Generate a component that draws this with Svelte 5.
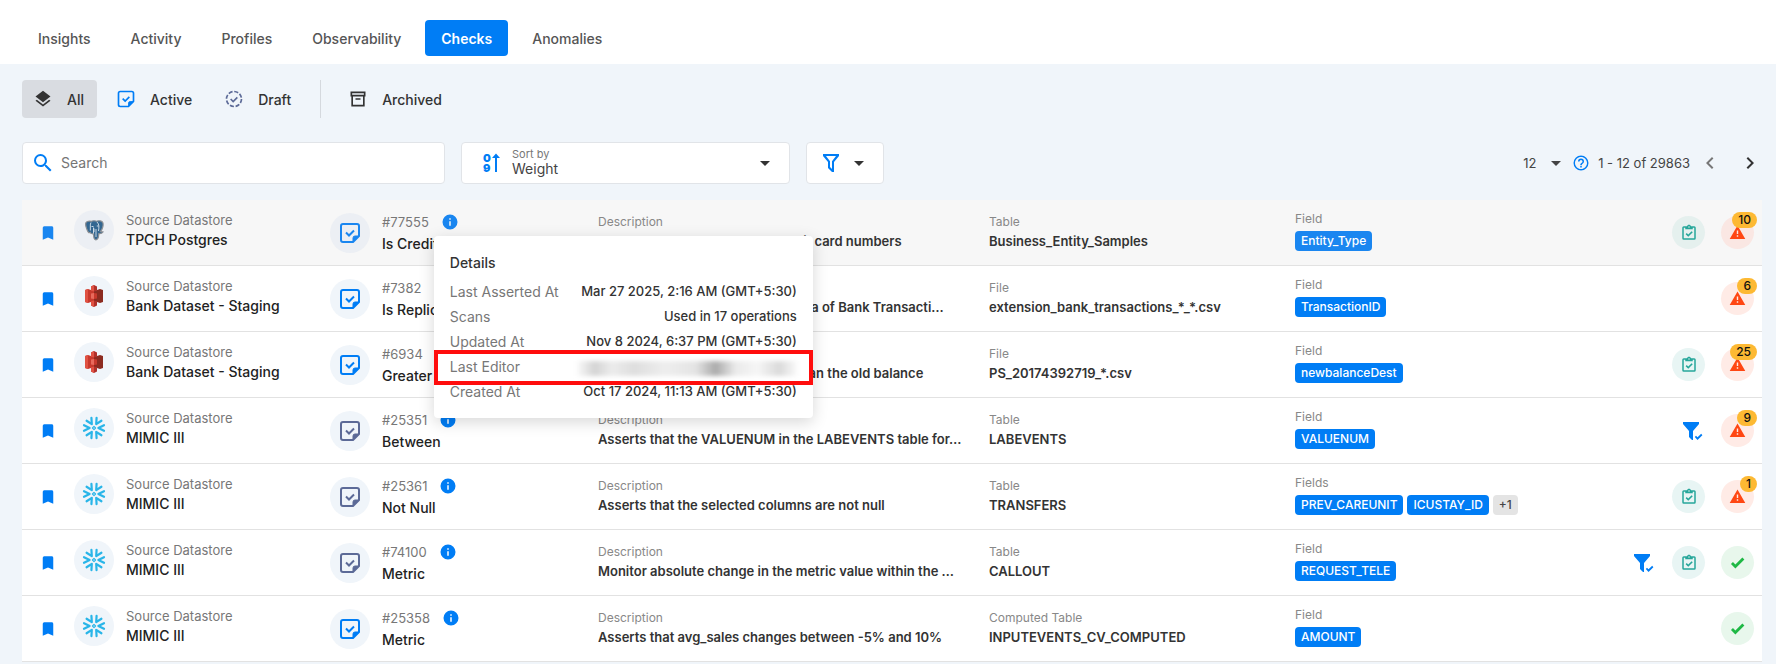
<script lang="ts">
  interface Check {
    source: 'postgres' | 's3' | 'snowflake';
    datastore: string;
    id: string;
    rule: string;
    // authored checks are blue, inferred ones are slate
    authored: boolean;
    description: string;
    containerType: string;
    container: string;
    fields: string[];
    extraFields?: number;
    filtered?: boolean;
    tagged?: boolean;
    anomalies: number;
  }

  const tabs = ['Insights', 'Activity', 'Profiles', 'Observability', 'Checks', 'Anomalies'];
  let activeTab = $state('Checks');
  let activeView = $state('All');
  let openDetails = $state('#77555');

  const checks: Check[] = [
    { source: 'postgres', datastore: 'TPCH Postgres', id: '#77555', rule: 'Is Credit Card', authored: true, description: 'Asserts that new values are credit card numbers', containerType: 'Table', container: 'Business_Entity_Samples', fields: ['Entity_Type'], tagged: true, anomalies: 10 },
    { source: 's3', datastore: 'Bank Dataset - Staging', id: '#7382', rule: 'Is Replica Of', authored: true, description: 'Asserts that the dataset is a replica of Bank Transacti…', containerType: 'File', container: 'extension_bank_transactions_*_*.csv', fields: ['TransactionID'], anomalies: 6 },
    { source: 's3', datastore: 'Bank Dataset - Staging', id: '#6934', rule: 'Greater Than Field', authored: true, description: 'A new balance must be greater than the old balance', containerType: 'File', container: 'PS_20174392719_*.csv', fields: ['newbalanceDest'], tagged: true, anomalies: 25 },
    { source: 'snowflake', datastore: 'MIMIC III', id: '#25351', rule: 'Between', authored: false, description: 'Asserts that the VALUENUM in the LABEVENTS table for…', containerType: 'Table', container: 'LABEVENTS', fields: ['VALUENUM'], filtered: true, anomalies: 9 },
    { source: 'snowflake', datastore: 'MIMIC III', id: '#25361', rule: 'Not Null', authored: false, description: 'Asserts that the selected columns are not null', containerType: 'Table', container: 'TRANSFERS', fields: ['PREV_CAREUNIT', 'ICUSTAY_ID'], extraFields: 1, tagged: true, anomalies: 1 },
    { source: 'snowflake', datastore: 'MIMIC III', id: '#74100', rule: 'Metric', authored: false, description: 'Monitor absolute change in the metric value within the …', containerType: 'Table', container: 'CALLOUT', fields: ['REQUEST_TELE'], filtered: true, tagged: true, anomalies: 0 },
    { source: 'snowflake', datastore: 'MIMIC III', id: '#25358', rule: 'Metric', authored: true, description: 'Asserts that avg_sales changes between -5% and 10%', containerType: 'Computed Table', container: 'INPUTEVENTS_CV_COMPUTED', fields: ['AMOUNT'], anomalies: 0 },
  ];

  const details = [
    { label: 'Last Asserted At', value: 'Mar 27 2025, 2:16 AM (GMT+5:30)' },
    { label: 'Scans', value: 'Used in 17 operations' },
    { label: 'Updated At', value: 'Nov 8 2024, 6:37 PM (GMT+5:30)' },
    { label: 'Last Editor', value: '' },
    { label: 'Created At', value: 'Oct 17 2024, 11:13 AM (GMT+5:30)' },
  ];

  const paths = {
    layers: 'M12,16L19.36,10.27L21,9L12,2L3,9L4.63,10.27M12,18.54L4.62,12.81L3,14.07L12,21.07L21,14.07L19.37,12.8L12,18.54Z',
    archive: 'M3 3H21V9H20V21H4V9H3V3M5 5V7H19V5H5M6 9V19H18V9H6M9 11H15V13H9V11Z',
    magnify: 'M9.5,3A6.5,6.5 0 0,1 16,9.5C16,11.11 15.41,12.59 14.44,13.73L14.71,14H15.5L20.5,19L19,20.5L14,15.5V14.71L13.73,14.44C12.59,15.41 11.11,16 9.5,16A6.5,6.5 0 0,1 3,9.5A6.5,6.5 0 0,1 9.5,3M9.5,5C7,5 5,7 5,9.5C5,12 7,14 9.5,14C12,14 14,12 14,9.5C14,7 12,5 9.5,5Z',
    caret: 'M7,10L12,15L17,10H7Z',
    funnel: 'M4 3H20V5L15 11V21H13L9 17V11L4 5V3M7 5L11 10.3V16L13 18V10.3L17 5H7Z',
    funnelCheck: 'M2 3H18V5L12 12V21H11L8 18V12L2 5V3M16.5 21L13.8 18L15 16.8L16.5 18.3L20.2 14.8L21.4 16.2L16.5 21Z',
    help: 'M11,18H13V16H11V18M12,2A10,10 0 0,0 2,12A10,10 0 0,0 12,22A10,10 0 0,0 22,12A10,10 0 0,0 12,2M12,20C7.59,20 4,16.41 4,12C4,7.59 7.59,4 12,4C16.41,4 20,7.59 20,12C20,16.41 16.41,20 12,20M12,6A4,4 0 0,0 8,10H10A2,2 0 0,1 12,8A2,2 0 0,1 14,10C14,12 11,11.75 11,15H13C13,12.75 16,12.5 16,10A4,4 0 0,0 12,6Z',
    prev: 'M15.41,16.58L10.83,12L15.41,7.41L14,6L8,12L14,18L15.41,16.58Z',
    next: 'M8.59,16.58L13.17,12L8.59,7.41L10,6L16,12L10,18L8.59,16.58Z',
    bookmark: 'M17,3H7A2,2 0 0,0 5,5V21L12,18L19,21V5C19,3.89 18.1,3 17,3Z',
    info: 'M13,9H11V7H13M13,17H11V11H13M12,2A10,10 0 0,0 2,12A10,10 0 0,0 12,22A10,10 0 0,0 22,12A10,10 0 0,0 12,2Z',
    clipboard: 'M19,3H14.82C14.4,1.84 13.3,1 12,1C10.7,1 9.6,1.84 9.18,3H5A2,2 0 0,0 3,5V19A2,2 0 0,0 5,21H19A2,2 0 0,0 21,19V5A2,2 0 0,0 19,3M12,3A1,1 0 0,1 13,4A1,1 0 0,1 12,5A1,1 0 0,1 11,4A1,1 0 0,1 12,3M7,7H17V5H19V19H5V5H7V7M7.5,13.5L9,12L11,14L15.5,9.5L17,11L11,17L7.5,13.5Z',
    alert: 'M13 14H11V9H13M13 18H11V16H13M1 21H23L12 2L1 21Z',
    check: 'M9,20.42L2.79,14.21L5.62,11.38L9,14.77L18.88,4.88L21.71,7.71L9,20.42Z',
  };

  function toggleDetails(id: string) {
    openDetails = openDetails === id ? '' : id;
  }
</script>

{#snippet icon(path: string, size: number)}
  <svg width={size} height={size} viewBox="0 0 24 24" fill="currentColor" aria-hidden="true"><path d={path} /></svg>
{/snippet}

{#snippet noteIcon(size: number)}
  <svg width={size} height={size} viewBox="0 0 24 24" fill="none" stroke="currentColor" stroke-width="2" aria-hidden="true">
    <path d="M15 21H5a2 2 0 0 1-2-2V5a2 2 0 0 1 2-2h14a2 2 0 0 1 2 2v10l-6 6Z" stroke-linejoin="round" />
    <path d="M15 21v-4a2 2 0 0 1 2-2h4Z" fill="currentColor" stroke-width="1" />
    <path d="M8 11.5l3 3 5-5" />
  </svg>
{/snippet}

{#snippet sourceLogo(source: string)}
  {#if source === 'postgres'}
    <svg width="24" height="24" viewBox="0 0 24 24" aria-hidden="true">
      <path d="M4 4.500C5.500 2.500 8 3 9.500 3.300C11 2.600 13 2.700 14.500 3.200C17 2.300 20 2.800 21 5C21.600 8 20 11.500 18.500 13.500L21 14C20 15.500 18.500 15.800 16.800 15.600C16.500 18 17 21.500 14 21.800C11.500 22 11.800 18 11.500 15.800C9 16 8.500 15.500 8.300 14.500C6.500 15.500 5.500 13 4.600 10.500C3.800 8 3 6 4 4.500Z" fill="#336791" stroke="#8b8f94" stroke-width="1.200" />
      <path d="M9 4.500C7.800 6.500 8.600 9 8.300 12.500M11.500 15.500V9.500M15 4C17.500 6.500 17 9 16.500 13M9.500 8.500H11.500M14.800 8H16.500M12 10.500V14M14 11V19" fill="none" stroke="#d9e3ec" stroke-width=".9" />
    </svg>
  {:else if source === 's3'}
    <svg width="24" height="24" viewBox="0 0 24 24" aria-hidden="true">
      <path d="M3 6l3-1 6 2v10l-6 2-3-1Z" fill="#c8392d" />
      <path d="M21 6l-3-1-6 2v10l6 2 3-1Z" fill="#8c2b20" />
      <path d="M6 5v14l-3-1V6Z" fill="#e05243" />
      <path d="M12 1l3 1.500v4.300L12 7.500 9 6.800V2.500Z" fill="#b0302a" />
      <path d="M12 23l3-1.500v-4.300L12 16.500l-3 .7v4.300Z" fill="#b0302a" />
      <path d="M12 1L9 2.500v4.300l3 .7ZM12 23l-3-1.500v-4.300l3-.7Z" fill="#e05243" />
      <path d="M9 9.500l3-.4v5.800l-3-.4Z" fill="#e86a5c" />
      <path d="M15 9.500l-3-.4v5.800l3-.4Z" fill="#c8392d" />
    </svg>
  {:else}
    <svg width="24" height="24" viewBox="0 0 24 24" fill="none" stroke="#29b5e8" stroke-width="2.200" stroke-linecap="round" stroke-linejoin="round" aria-hidden="true">
      <path d="M12 10.400L13.600 12 12 13.600 10.400 12Z" stroke-width="1.100" />
      {#each [0, 60, 120, 180, 240, 300] as angle}
        <path d="M22 9.200L16.400 12 22 14.800" transform={`rotate(${angle} 12 12)`} />
      {/each}
    </svg>
  {/if}
{/snippet}

<header class="tabs">
  <nav>
    {#each tabs as tab}
      <button class="tab" class:active={activeTab === tab} onclick={() => (activeTab = tab)}>{tab}</button>
    {/each}
  </nav>
</header>

<main>
  <div class="views">
    <button class="view" class:selected={activeView === 'All'} onclick={() => (activeView = 'All')}>
      {@render icon(paths.layers, 20)}All
    </button>
    <button class="view blue" class:selected={activeView === 'Active'} onclick={() => (activeView = 'Active')}>
      {@render noteIcon(20)}<span>Active</span>
    </button>
    <button class="view slate" class:selected={activeView === 'Draft'} onclick={() => (activeView = 'Draft')}>
      <svg width="20" height="20" viewBox="0 0 24 24" fill="none" stroke="currentColor" stroke-width="2" aria-hidden="true">
        <circle cx="12" cy="12" r="9" stroke-dasharray="5 2.070" />
        <path d="M8 12l3 3 5-5" />
      </svg><span>Draft</span>
    </button>
    <span class="divider"></span>
    <button class="view" class:selected={activeView === 'Archived'} onclick={() => (activeView = 'Archived')}>
      {@render icon(paths.archive, 20)}Archived
    </button>
  </div>

  <div class="toolbar">
    <label class="box search">
      {@render icon(paths.magnify, 24)}
      <input type="text" placeholder="Search" aria-label="Search" />
    </label>

    <div class="box sort">
      <svg class="sort-icon" width="24" height="24" viewBox="0 0 24 24" fill="currentColor" aria-hidden="true">
        <text x="3" y="11">0</text>
        <text x="3" y="21">9</text>
        <path d="M15 21V7h-3l4-4.500L20 7h-3v14Z" />
      </svg>
      <div class="sort-text">
        <label for="sort">Sort by</label>
        <select id="sort">
          <option>Weight</option>
          <option>Anomalies</option>
          <option>Created Date</option>
        </select>
      </div>
      {@render icon(paths.caret, 24)}
    </div>

    <button class="box filter" aria-label="Filter">
      {@render icon(paths.funnel, 24)}
      {@render icon(paths.caret, 24)}
    </button>

    <div class="pagination">
      <span class="page-size">
        <select aria-label="Rows per page">
          <option>12</option>
          <option>24</option>
        </select>
        {@render icon(paths.caret, 24)}
      </span>
      <span class="help">{@render icon(paths.help, 18)}</span>
      <span class="range">1 - 12 of 29863</span>
      <button class="page prev" aria-label="Previous page" disabled>{@render icon(paths.prev, 24)}</button>
      <button class="page" aria-label="Next page">{@render icon(paths.next, 24)}</button>
    </div>
  </div>

  <table>
    <colgroup>
      <col class="col-mark" />
      <col class="col-source" />
      <col class="col-check" />
      <col class="col-description" />
      <col class="col-container" />
      <col />
      <col class="col-status" />
    </colgroup>
    <tbody>
      {#each checks as check, i}
        <tr class:hovered={i === 0}>
          <td>
            <button class="bookmark" aria-label="Bookmark">{@render icon(paths.bookmark, 18)}</button>
          </td>
          <td>
            <div class="source">
              <span class="avatar">{@render sourceLogo(check.source)}</span>
              <div class="source-text">
                <div class="label wide">Source Datastore</div>
                <div class="name">{check.datastore}</div>
              </div>
            </div>
          </td>
          <td>
            <div class="rule">
              <span class="avatar" class:authored={check.authored}>{@render noteIcon(24)}</span>
              <div class="rule-text">
                <div class="id-line">
                  <span class="label wide">{check.id}</span>
                  <span class="anchor">
                    <button class="info" aria-label="Details" onclick={() => toggleDetails(check.id)}>
                      {@render icon(paths.info, 18)}
                    </button>
                    {#if openDetails === check.id}
                      <div class="popup">
                        <h2>Details</h2>
                        <dl>
                          {#each details as item}
                            <div class="detail" class:highlight={item.label === 'Last Editor'}>
                              <dt>{item.label}</dt>
                              <dd>
                                {#if item.value}{item.value}{:else}<span class="redacted"></span>{/if}
                              </dd>
                            </div>
                          {/each}
                        </dl>
                      </div>
                    {/if}
                  </span>
                </div>
                <div class="name">{check.rule}</div>
              </div>
            </div>
          </td>
          <td>
            <div class="cell">
              <div class="label">Description</div>
              <div class="value">{check.description}</div>
            </div>
          </td>
          <td>
            <div class="cell">
              <div class="label">{check.containerType}</div>
              <div class="value">{check.container}</div>
            </div>
          </td>
          <td>
            <div class="fields">
              <div class="label">{check.fields.length > 1 ? 'Fields' : 'Field'}</div>
              <div class="chips">
                {#each check.fields as field}
                  <span class="chip">{field}</span>
                {/each}
                {#if check.extraFields}
                  <span class="chip more">+{check.extraFields}</span>
                {/if}
              </div>
            </div>
          </td>
          <td>
            <div class="status">
              {#if check.filtered}
                <span class="filtered">{@render icon(paths.funnelCheck, 24)}</span>
              {/if}
              {#if check.tagged}
                <span class="round teal">{@render icon(paths.clipboard, 18)}</span>
              {/if}
              {#if check.anomalies}
                <span class="round red">
                  {@render icon(paths.alert, 17)}
                  <span class="badge">{check.anomalies}</span>
                </span>
              {:else}
                <span class="round green">{@render icon(paths.check, 17)}</span>
              {/if}
            </div>
          </td>
        </tr>
      {/each}
    </tbody>
  </table>
</main>

<style>
  :global(body) {
    background: #f0f5fa;
    color: #333;
    font-family: Inter, 'Open Sans', sans-serif;
    font-size: 14px;
  }

  svg {
    display: block;
    flex: none;
  }

  button,
  input,
  select {
    font: inherit;
    color: inherit;
    border: none;
    background: none;
    padding: 0;
    margin: 0;
    appearance: none;
  }

  button {
    cursor: pointer;
  }

  .tabs {
    background: #fff;
    padding: 20px 22px 8px;
  }

  nav {
    display: flex;
    gap: 8px;
  }

  .tab {
    height: 36px;
    padding: 0 16px;
    border-radius: 4px;
    font-weight: 500;
    color: #555;
  }

  .tab.active {
    background: #007df5;
    color: #fff;
    font-weight: 600;
  }

  main {
    --blue: #007df5;
    padding: 16px 14px 0 22px;
  }

  .views {
    display: flex;
    align-items: center;
    gap: 8px;
    margin-bottom: 24px;
  }

  .view {
    display: flex;
    align-items: center;
    gap: 14px;
    height: 38px;
    padding: 0 13px 0 11px;
    border-radius: 4px;
    font-weight: 500;
  }

  .view.selected {
    background: #d9dce1;
  }

  .view.blue {
    color: #007df5;
  }

  .view.slate {
    color: #5c6a97;
  }

  .view span {
    color: #333;
  }

  .divider {
    width: 1px;
    height: 38px;
    margin: 0 8px;
    background: #d5d9de;
  }

  .toolbar {
    display: flex;
    align-items: center;
    gap: 16px;
    margin-bottom: 16px;
  }

  .box {
    display: flex;
    align-items: center;
    box-sizing: border-box;
    height: 42px;
    border: 1px solid #e1e4e8;
    border-radius: 4px;
    background: #fff;
  }

  .search {
    flex: 0 1 423px;
    gap: 6px;
    padding: 0 8px;
    color: #007df5;
  }

  .search input {
    flex: 1;
    min-width: 0;
    padding-bottom: 2px;
    color: #333;
    outline: none;
  }

  .search input::placeholder {
    color: #757575;
    opacity: 1;
  }

  .sort {
    flex: 0 1 329px;
    gap: 8px;
    padding: 0 12px 0 18px;
  }

  .sort-icon {
    color: #007df5;
  }

  .sort-icon text {
    font-size: 11px;
    font-weight: 900;
  }

  .sort-text {
    flex: 1;
    display: flex;
    flex-direction: column;
    padding-bottom: 2px;
  }

  .sort-text label {
    font-size: 11px;
    line-height: 14px;
    color: #777;
  }

  .sort-text select {
    line-height: 16px;
    color: #444;
  }

  .filter {
    gap: 4px;
    padding: 0 12px;
  }

  .filter svg:first-child {
    color: #007df5;
  }

  .pagination {
    display: flex;
    align-items: center;
    gap: 8px;
    margin-left: auto;
    font-size: 13px;
    color: #444;
  }

  .page-size {
    display: flex;
    align-items: center;
    gap: 4px;
  }

  .page-size svg {
    margin-right: -4px;
  }

  .help {
    color: #007df5;
  }

  .page {
    color: #333;
  }

  .page.prev {
    margin-right: 8px;
    color: #777;
  }

  table {
    width: 100%;
    table-layout: fixed;
    border-collapse: separate;
    border-spacing: 0;
    background: #fff;
    border-radius: 4px 4px 0 0;
  }

  .col-mark {
    width: 52px;
  }

  .col-source {
    width: 256px;
  }

  .col-check {
    width: 268px;
  }

  .col-description {
    width: 391px;
  }

  .col-container {
    width: 306px;
  }

  .col-status {
    width: 160px;
  }

  td {
    box-sizing: border-box;
    height: 66px;
    padding: 0;
    border-bottom: 1px solid #e2e2e2;
    vertical-align: middle;
  }

  .hovered {
    --blue: #1a86f0;
    background: #f7f7f7;
  }

  .bookmark {
    display: block;
    margin-left: 17px;
    color: var(--blue);
  }

  .source,
  .rule {
    display: flex;
    align-items: center;
    gap: 12px;
    white-space: nowrap;
  }

  .source {
    padding-bottom: 6px;
  }

  .source-text {
    padding-top: 2px;
  }

  .rule-text {
    padding-top: 2px;
  }

  .rule-text .name {
    margin-top: 2px;
  }

  .avatar {
    display: grid;
    place-items: center;
    width: 40px;
    height: 40px;
    border-radius: 50%;
    background: #f0f5fa;
    color: #5c6a97;
  }

  .hovered .avatar {
    background: #eceff4;
  }

  .avatar.authored {
    color: var(--blue);
  }

  .label {
    font-size: 12px;
    line-height: 18px;
    color: #888;
  }

  .label.wide {
    font-size: 13px;
    color: #777;
  }

  .name {
    line-height: 22px;
    font-weight: 500;
    color: #222;
  }

  .cell {
    padding: 0 16px 2px 0;
  }

  .value {
    font-size: 13px;
    line-height: 20px;
    font-weight: 600;
    color: #333;
    white-space: nowrap;
    overflow: hidden;
    text-overflow: ellipsis;
  }

  .id-line {
    display: flex;
    align-items: center;
    gap: 12px;
  }

  .anchor {
    position: relative;
  }

  .info {
    display: block;
    color: var(--blue);
  }

  .popup {
    position: absolute;
    z-index: 2;
    top: 23px;
    left: -7px;
    box-sizing: border-box;
    width: 379px;
    padding: 16px 0 14px;
    border-radius: 4px;
    background: #fff;
    box-shadow: 0 4px 16px rgba(0, 0, 0, 0.16);
  }

  h2 {
    margin: 0 0 5px;
    padding: 0 16px;
    font-size: 14px;
    line-height: 22px;
    font-weight: 500;
    color: #333;
  }

  dl {
    margin: 0;
  }

  .detail {
    position: relative;
    display: flex;
    justify-content: space-between;
    padding: 0 16px;
    line-height: 25px;
  }

  .detail.highlight::after {
    content: '';
    position: absolute;
    inset: -4px 0 -6px;
    border: 4px solid #ff0d0d;
  }

  dt {
    color: #777;
  }

  dd {
    margin: 0;
    font-size: 13px;
    font-weight: 500;
    color: #333;
  }

  .redacted {
    display: block;
    width: 220px;
    height: 15px;
    margin-top: 7px;
    background: linear-gradient(90deg, #fafafa, #d4d4d4 8%, #ececec 16%, #dedede 26%, #eee 40%, #e4e4e4 54%, #ababab 63%, #eaeaea 72%, #f6f6f6 82%, #dadada 92%, #fafafa);
    filter: blur(2px);
  }

  .fields {
    padding-bottom: 4px;
  }

  .chips {
    display: flex;
    gap: 4px;
    margin-top: 3px;
  }

  .chip {
    padding: 0 6px;
    border-radius: 4px;
    background: var(--blue);
    color: #fff;
    font-size: 12px;
    line-height: 20px;
    font-weight: 500;
  }

  .chip.more {
    background: #e4e4e4;
    color: #444;
  }

  .status {
    display: flex;
    align-items: center;
    justify-content: flex-end;
    gap: 16px;
    padding-right: 8px;
  }

  .round {
    position: relative;
    display: grid;
    place-items: center;
    width: 33px;
    height: 33px;
    border-radius: 50%;
  }

  .filtered {
    color: var(--blue);
  }

  .teal {
    background: #e8f5f4;
    color: #26a69a;
  }

  .red {
    background: #ffebe6;
    color: #ff4713;
  }

  .green {
    background: #e8f7ec;
    color: #1fb845;
  }

  .hovered .teal {
    background: #e5f0ee;
  }

  .hovered .red {
    background: #fae7e3;
  }

  .badge {
    position: absolute;
    top: -4px;
    right: -3px;
    padding: 0 6px;
    border-radius: 8px;
    background: #fdb933;
    color: #111;
    font-size: 12px;
    line-height: 16px;
    font-weight: 500;
  }
</style>
